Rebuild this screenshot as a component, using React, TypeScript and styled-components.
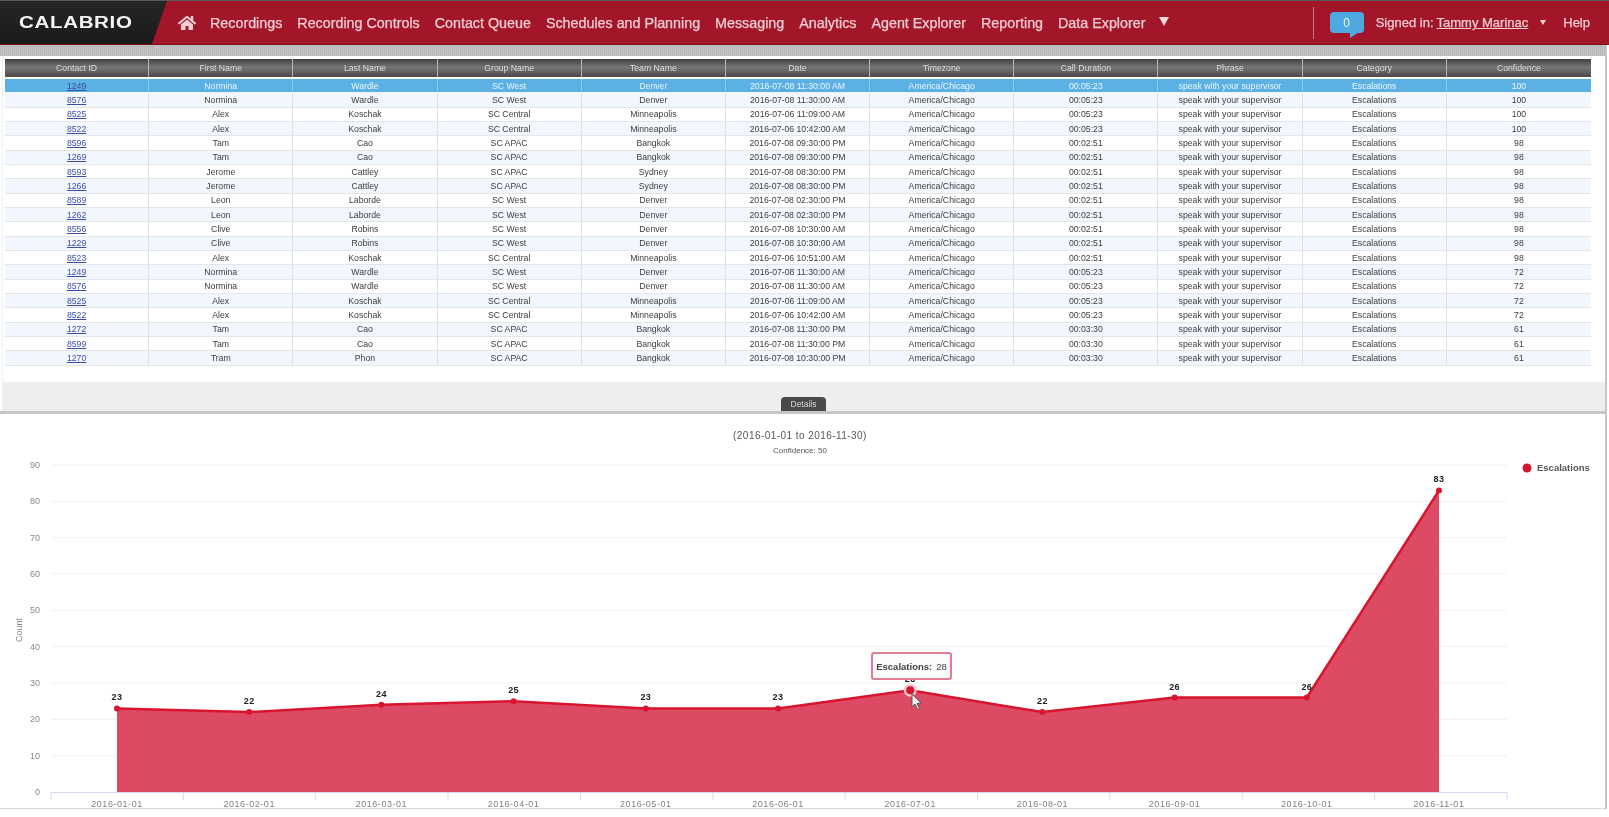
import React from "react";
import styled, { createGlobalStyle } from "styled-components";
import { FaHome } from "react-icons/fa";

const Global = createGlobalStyle`
  html, body { margin: 0; padding: 0; background: #fff; overflow: hidden; }
  * { box-sizing: border-box; }
`;

const Page = styled.div`
  width: 1609px;
  height: 817px;
  overflow: hidden;
  background: #fff;
  font-family: "Liberation Sans", Arial, sans-serif;
  filter: blur(0.6px);
  display: flex;
  flex-direction: column;
`;

const TopBar = styled.header`
  height: 45px;
  flex: none;
  display: flex;
  align-items: center;
  background: #a31529;
  border-top: 1px solid #55595c;
  border-bottom: 1px solid #7d1020;
`;

const LogoBlock = styled.div`
  width: 167px;
  height: 100%;
  flex: none;
  display: flex;
  align-items: center;
  padding-left: 19px;
  background: linear-gradient(#262626, #1a1a1a);
  clip-path: polygon(0 0, 100% 0, 91% 100%, 0 100%);
`;

const LogoText = styled.span`
  font-family: "Liberation Sans", Arial, sans-serif;
  font-weight: 700;
  font-size: 15.8px;
  letter-spacing: 0.5px;
  color: #f4f4f4;
  transform: scaleX(1.3);
  transform-origin: left center;
`;

const HomeLink = styled.span`
  display: flex;
  margin-left: 11px;
  margin-right: 14px;
  color: #f3cfd3;
  font-size: 18px;
`;

const Nav = styled.nav`
  display: flex;
  align-items: center;
  gap: 15px;
`;

const NavItem = styled.span`
  font-size: 14.3px;
  color: #f0cdd1;
  white-space: nowrap;
  -webkit-text-stroke: 0.25px #f0cdd1;
`;

const NavCaret = styled.span`
  width: 0;
  height: 0;
  margin-left: -1px;
  margin-top: -2px;
  border-left: 5px solid transparent;
  border-right: 5px solid transparent;
  border-top: 9px solid #f3d9dc;
`;

const UserArea = styled.div`
  margin-left: auto;
  height: 32px;
  display: flex;
  align-items: center;
  padding-left: 16px;
  padding-right: 19px;
  border-left: 1px solid #c77a85;
`;

const Bubble = styled.span`
  position: relative;
  width: 34px;
  height: 21px;
  margin-right: 12px;
  border-radius: 4px;
  background: #4ea9e0;
  color: #e8f4fb;
  font-size: 12px;
  display: flex;
  align-items: center;
  justify-content: center;

  &::after {
    content: "";
    position: absolute;
    left: 20px;
    top: 21px;
    width: 0;
    height: 0;
    border-top: 5px solid #4ea9e0;
    border-left: 5px solid #4ea9e0;
    border-right: 3px solid transparent;
    border-bottom: 0 solid transparent;
    clip-path: polygon(0 0, 100% 0, 0 100%);
  }
`;

const UserText = styled.span`
  font-size: 13px;
  color: #f0cdd1;
  white-space: nowrap;
  -webkit-text-stroke: 0.25px #f0cdd1;
`;

const UserName = styled.span`
  margin-left: 3px;
  text-decoration: underline;
`;

const UserCaret = styled.span`
  width: 0;
  height: 0;
  margin-left: 12px;
  margin-right: 17px;
  border-left: 3px solid transparent;
  border-right: 3px solid transparent;
  border-top: 5px solid #f3d9dc;
`;

const Frame = styled.div`
  flex: none;
  width: 1607px;
  height: 764px;
  border-right: 2px solid #c6c6c6;
  display: flex;
  flex-direction: column;
`;

const Band = styled.div`
  height: 11px;
  flex: none;
  background: repeating-linear-gradient(90deg, #b9b9b9 0 1px, #c4c4c4 1px 2px);
`;

const TablePanel = styled.section`
  height: 326px;
  flex: none;
  margin-left: 2px;
  padding: 3px 14px 0 2px;
  background: #fff;
  border-left: 1px solid #f0f0f0;
`;

const HeaderRow = styled.div`
  height: 18px;
  margin-bottom: 2px;
  display: grid;
  grid-template-columns: repeat(11, 1fr);
  background: linear-gradient(#403e3c, #787776 45%, #4a4947);
`;

const HeaderCell = styled.div`
  display: flex;
  align-items: center;
  justify-content: center;
  font-size: 8.7px;
  color: #dcdcdc;
  border-right: 1px solid #b5b5b5;

  &:last-child { border-right: 0; }
`;

const Row = styled.div<{ $stripe: boolean; $selected: boolean }>`
  height: 14.33px;
  display: grid;
  grid-template-columns: repeat(11, 1fr);
  background: ${(p) => (p.$selected ? "#5bb0e4" : p.$stripe ? "#f2f7fd" : "#fff")};
  border-bottom: 1px solid ${(p) => (p.$selected ? "#eef5fb" : "#e3e6e9")};
  color: ${(p) => (p.$selected ? "#eef7fd" : "#3c3c3c")};
`;

const Cell = styled.div<{ $selected?: boolean }>`
  display: flex;
  align-items: center;
  justify-content: center;
  font-size: 8.7px;
  white-space: nowrap;
  border-right: 1px solid ${(p) => (p.$selected ? "#8cc7ec" : "#dde1e5")};

  &:last-child { border-right: 0; }
`;

const IdLink = styled.a`
  color: #3c4fa8;
  text-decoration: underline;
  font-size: 8.7px;
`;

const Divider = styled.div`
  height: 29px;
  flex: none;
  display: flex;
  align-items: flex-end;
  justify-content: center;
  background: #edeef0;
  margin-left: 2px;
`;

const DetailsTab = styled.span`
  width: 45px;
  height: 14px;
  display: flex;
  align-items: center;
  justify-content: center;
  border-radius: 4px 4px 0 0;
  background: #4a4a4a;
  color: #d8d8d8;
  font-size: 8.5px;
`;

const Rule = styled.div`
  height: 3px;
  flex: none;
  background: #c4c6c8;
`;

const ChartPanel = styled.section`
  position: relative;
  height: 395px;
  flex: none;
  background: #fff;
  border-bottom: 1px solid #d8d8d8;
`;

const ChartSvg = styled.svg`
  display: block;
`;

const Tooltip = styled.div`
  position: absolute;
  left: 871px;
  top: 238px;
  width: 81px;
  height: 28px;
  display: flex;
  align-items: center;
  justify-content: center;
  gap: 4px;
  background: #fbfbfc;
  border: 2px solid #dd7f90;
  border-radius: 3px;
  font-size: 9.5px;
  color: #444;
  white-space: nowrap;
`;

const TooltipName = styled.b`
  font-weight: 700;
`;

const columns = [
  "Contact ID", "First Name", "Last Name", "Group Name", "Team Name", "Date",
  "Timezone", "Call Duration", "Phrase", "Category", "Confidence",
];

type Rec = [string, string, string, string, string, string, string, string];

const rows: Rec[] = [
  ["1249", "Normina", "Wardle", "SC West", "Denver", "2016-07-08 11:30:00 AM", "00:05:23", "100"],
  ["8576", "Normina", "Wardle", "SC West", "Denver", "2016-07-08 11:30:00 AM", "00:05:23", "100"],
  ["8525", "Alex", "Koschak", "SC Central", "Minneapolis", "2016-07-06 11:09:00 AM", "00:05:23", "100"],
  ["8522", "Alex", "Koschak", "SC Central", "Minneapolis", "2016-07-06 10:42:00 AM", "00:05:23", "100"],
  ["8596", "Tam", "Cao", "SC APAC", "Bangkok", "2016-07-08 09:30:00 PM", "00:02:51", "98"],
  ["1269", "Tam", "Cao", "SC APAC", "Bangkok", "2016-07-08 09:30:00 PM", "00:02:51", "98"],
  ["8593", "Jerome", "Cattley", "SC APAC", "Sydney", "2016-07-08 08:30:00 PM", "00:02:51", "98"],
  ["1266", "Jerome", "Cattley", "SC APAC", "Sydney", "2016-07-08 08:30:00 PM", "00:02:51", "98"],
  ["8589", "Leon", "Laborde", "SC West", "Denver", "2016-07-08 02:30:00 PM", "00:02:51", "98"],
  ["1262", "Leon", "Laborde", "SC West", "Denver", "2016-07-08 02:30:00 PM", "00:02:51", "98"],
  ["8556", "Clive", "Robins", "SC West", "Denver", "2016-07-08 10:30:00 AM", "00:02:51", "98"],
  ["1229", "Clive", "Robins", "SC West", "Denver", "2016-07-08 10:30:00 AM", "00:02:51", "98"],
  ["8523", "Alex", "Koschak", "SC Central", "Minneapolis", "2016-07-06 10:51:00 AM", "00:02:51", "98"],
  ["1249", "Normina", "Wardle", "SC West", "Denver", "2016-07-08 11:30:00 AM", "00:05:23", "72"],
  ["8576", "Normina", "Wardle", "SC West", "Denver", "2016-07-08 11:30:00 AM", "00:05:23", "72"],
  ["8525", "Alex", "Koschak", "SC Central", "Minneapolis", "2016-07-06 11:09:00 AM", "00:05:23", "72"],
  ["8522", "Alex", "Koschak", "SC Central", "Minneapolis", "2016-07-06 10:42:00 AM", "00:05:23", "72"],
  ["1272", "Tam", "Cao", "SC APAC", "Bangkok", "2016-07-08 11:30:00 PM", "00:03:30", "61"],
  ["8599", "Tam", "Cao", "SC APAC", "Bangkok", "2016-07-08 11:30:00 PM", "00:03:30", "61"],
  ["1270", "Tram", "Phon", "SC APAC", "Bangkok", "2016-07-08 10:30:00 PM", "00:03:30", "61"],
];

const navItems = [
  "Recordings", "Recording Controls", "Contact Queue", "Schedules and Planning",
  "Messaging", "Analytics", "Agent Explorer", "Reporting", "Data Explorer",
];

const values = [23, 22, 24, 25, 23, 23, 28, 22, 26, 26, 83];
const months = ["01", "02", "03", "04", "05", "06", "07", "08", "09", "10", "11"];

// Chart geometry, in the panel's own coordinates (the panel starts at y=414 on the page).
const plotLeft = 51;
const plotRight = 1507;
const baseY = 378;
const unit = 3.633;
const tickStep = (plotRight - plotLeft) / 11;
const px = (i: number) => 117 + 132.2 * i;
const py = (v: number) => baseY - unit * v;

const Chart = () => {
  const line = values.map((v, i) => `${px(i).toFixed(1)},${py(v).toFixed(1)}`).join(" ");
  const area = `${px(0)},${baseY} ${line} ${px(10)},${baseY}`;
  return (
    <ChartSvg width={1605} height={394} viewBox="0 0 1605 394">
      <g fontFamily="'Liberation Sans', Arial, sans-serif">
        <text x={800} y={25} fontSize={10} fill="#555" textAnchor="middle" letterSpacing={0.45}>
          (2016-01-01 to 2016-11-30)
        </text>
        <text x={800} y={39} fontSize={8} fill="#555" textAnchor="middle">
          Confidence: 50
        </text>
        {[0, 10, 20, 30, 40, 50, 60, 70, 80, 90].map((t) => (
          <g key={t}>
            {t > 0 && <line x1={plotLeft} x2={plotRight} y1={py(t)} y2={py(t)} stroke="#f0f1f3" strokeWidth={1} />}
            <text x={40} y={py(t) + 3} fontSize={9} fill="#888" textAnchor="end">
              {t}
            </text>
          </g>
        ))}
        <text
          x={0}
          y={0}
          fontSize={9}
          fill="#888"
          textAnchor="middle"
          transform="translate(22 216) rotate(-90)"
        >
          Count
        </text>

        <polygon points={area} fill="#dc4a63" />
        <polyline points={line} fill="none" stroke="#d8152f" strokeWidth={2.5} />
        <line x1={plotLeft} x2={plotRight} y1={baseY + 0.5} y2={baseY + 0.5} stroke="#d5dcf0" />
        {Array.from({ length: 12 }).map((_, i) => (
          <line
            key={i}
            x1={plotLeft + tickStep * i}
            x2={plotLeft + tickStep * i}
            y1={baseY}
            y2={baseY + 8}
            stroke="#d5dcf0"
          />
        ))}
        {months.map((m, i) => (
          <text
            key={m}
            x={px(i)}
            y={393}
            fontSize={9}
            fill="#808080"
            textAnchor="middle"
            letterSpacing={0.55}
          >
            {`2016-${m}-01`}
          </text>
        ))}
        {values.map((v, i) => (
          <g key={i}>
            <circle cx={px(i)} cy={py(v)} r={i === 6 ? 6.5 : 0} fill="#f4c4cc" />
            <circle cx={px(i)} cy={py(v)} r={i === 6 ? 4 : 3} fill="#d8152f" />
            <text
              x={px(i)}
              y={py(v) - 8}
              fontSize={9}
              fontWeight={700}
              fill="#222"
              textAnchor="middle"
              letterSpacing={0.4}
            >
              {v}
            </text>
          </g>
        ))}
        <circle cx={1527} cy={54} r={4.5} fill="#d8152f" />
        <text x={1537} y={57} fontSize={9.5} fill="#555" fontWeight={700}>
          Escalations
        </text>
        <path
          d="M912 280 L912 293 L915 290 L917.5 295.5 L919.5 294.5 L917 289.5 L921 289 Z"
          fill="#f0f0f0"
          stroke="#555"
          strokeWidth={1}
        />
      </g>
    </ChartSvg>
  );
};

export default function App() {
  return (
    <Page>
      <Global />
      <TopBar>
        <LogoBlock>
          <LogoText>CALABRIO</LogoText>
        </LogoBlock>
        <HomeLink>
          <FaHome />
        </HomeLink>
        <Nav>
          {navItems.map((n) => (
            <NavItem key={n}>{n}</NavItem>
          ))}
          <NavCaret />
        </Nav>
        <UserArea>
          <Bubble>0</Bubble>
          <UserText>
            Signed in:<UserName>Tammy Marinac</UserName>
          </UserText>
          <UserCaret />
          <UserText>Help</UserText>
        </UserArea>
      </TopBar>
      <Frame>
        <Band />
        <TablePanel>
          <HeaderRow>
            {columns.map((c) => (
              <HeaderCell key={c}>{c}</HeaderCell>
            ))}
          </HeaderRow>
          {rows.map((r, i) => {
            const selected = i === 0;
            const cells = [
              r[1], r[2], r[3], r[4], r[5], "America/Chicago", r[6],
              "speak with your supervisor", "Escalations", r[7],
            ];
            return (
              <Row key={i} $stripe={i % 2 === 1} $selected={selected}>
                <Cell $selected={selected}>
                  <IdLink>{r[0]}</IdLink>
                </Cell>
                {cells.map((c, j) => (
                  <Cell key={j} $selected={selected}>
                    {c}
                  </Cell>
                ))}
              </Row>
            );
          })}
        </TablePanel>
        <Divider>
          <DetailsTab>Details</DetailsTab>
        </Divider>
        <Rule />
        <ChartPanel>
          <Chart />
          <Tooltip>
            <TooltipName>Escalations:</TooltipName> 28
          </Tooltip>
        </ChartPanel>
      </Frame>
    </Page>
  );
}
